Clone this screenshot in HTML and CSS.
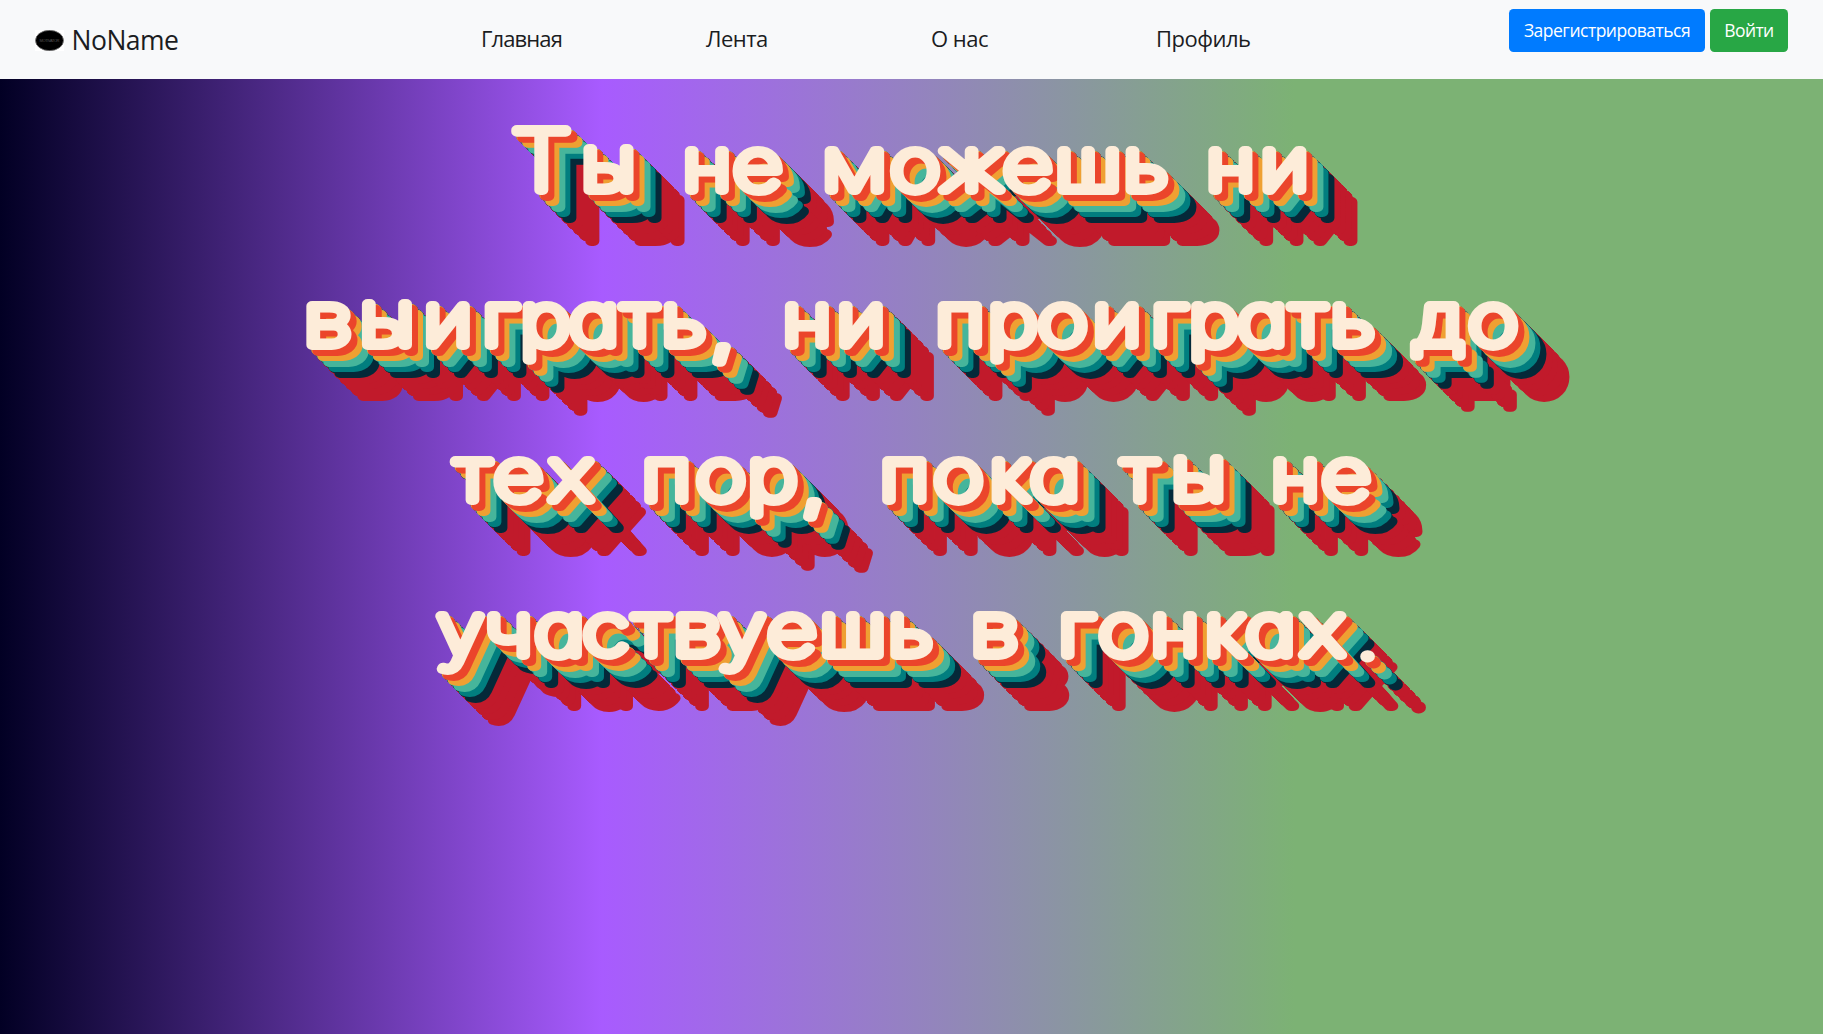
FILE: index.html
```html
<!DOCTYPE html>
<html lang="ru">
<head>
<meta charset="utf-8">
<title>NoName</title>
<link rel="stylesheet" href="styles.css">
</head>
<body>
<header class="navbar">
  <a class="brand">
    <svg class="logo" viewBox="0 0 29 21" width="29" height="21"><rect width="29" height="21" fill="#fff"/><ellipse cx="14.5" cy="10.5" rx="14" ry="10.2" fill="#000" stroke="#777" stroke-width=".8"/><text x="14.5" y="12" text-anchor="middle" textLength="20" class="logo-text">MOTIVATOR</text></svg>
    <span class="brand-name">NoName</span>
  </a>
  <nav class="menu">
    <a class="link home">Главная</a>
    <a class="link feed">Лента</a>
    <a class="link about">О нас</a>
    <a class="link profile">Профиль</a>
  </nav>
  <div class="actions">
    <button class="btn primary">Зарегистрироваться</button>
    <button class="btn success">Войти</button>
  </div>
</header>
<main class="hero">
  <svg class="slogan" viewBox="0 79 1823 700" width="1823" height="700">
    <g transform="scale(1.2 1)">
      <text y="190.5" x="451 507 548 589 631.4 671 712 762.5 809.6 856.3 906.7 954.6 990 1025.3 1070.3"><tspan class="capital">Т</tspan><tspan class="wide">ы</tspan> не можешь ни</text>
      <text y="345.5" x="273 322.5 373.3 416.7 454.4 495 533 569.7 602.2 637 672.5 717.5 760 800 844 885.5 930.8 974 1011.5 1051.8 1090 1127 1163 1199 1244.3">в<tspan class="wide">ы</tspan>играть<tspan class="comma" dy="7">,</tspan><tspan dy="-7"> </tspan>ни проиграть до</text>
      <text y="500.5" x="393.8 431.9 475.7 515 555.3 600.8 643.8 678 716 753.7 798.7 841.3 879.2 915 949.8 998.8 1040 1079.2 1121.7">тех пор<tspan class="comma" dy="7">,</tspan><tspan dy="-7"> </tspan>пока т<tspan class="wide">ы</tspan> не</text>
      <text y="655.5" x="383.7 423.8 466.1 504.8 542.5 580.7 618.4 659.8 710.8 758.7 794 828.6 864 897 936.2 979 1020.7 1058.8 1102 1139.7">участвуешь в гонках<tspan class="dot" dy="5">.</tspan></text>
    </g>
  </svg>
</main>
</body>
</html>
```
FILE: styles.css
```css
html { background: #fff; }
body {
  margin: 0;
  width: 1823px;
  height: 1034px;
  display: flex;
  flex-direction: column;
  overflow: hidden;
  font-family: "Open Sans", "Noto Sans", sans-serif;
}
.navbar {
  height: 79px;
  box-sizing: border-box;
  padding: 0 35px;
  background: #f8f9fa;
  color: #1b1d1f;
  display: grid;
  grid-template-columns: 446px 1fr auto;
}
.brand { display: flex; align-items: center; gap: 7.5px; padding-top: 2px; }
.logo { display: block; }
.logo-text { font: 4px "Liberation Sans", sans-serif; fill: #555; }
.brand-name { font-size: 26.5px; line-height: 40px; letter-spacing: -0.5px; font-weight: 400; margin-top: -1px; }
.menu { display: grid; grid-template-columns: repeat(4, 225px); align-items: center; padding-bottom: 4px; }
.link { font-size: 22px; line-height: 34px; letter-spacing: -0.5px; }
.home { letter-spacing: -0.9px; }
.actions { display: flex; gap: 5px; padding-top: 9px; align-items: flex-start; }
.btn {
  height: 43px;
  padding: 0;
  border: 0;
  border-radius: 4.5px;
  color: #fff;
  font: 17.5px/43px "Open Sans", "Noto Sans", sans-serif;
  text-align: center;
}
.primary { width: 196px; background: #007bff; letter-spacing: -0.5px; }
.success { width: 78px; background: #28a745; letter-spacing: -0.6px; }
.hero {
  flex: 1;
  background: linear-gradient(90deg, #020024 0%, #a85bff 33%, #7cb274 71%);
}
.slogan {
  display: block;
  overflow: visible;
  font-family: Inter, "Noto Sans", sans-serif;
  font-size: 71.5px;
  font-weight: 100;
  font-feature-settings: "cv11";
  text-anchor: middle;
  fill: #fdecd9;
  stroke: #fdecd9;
  stroke-width: 9.8;
  stroke-linejoin: round;
  filter:
    drop-shadow(6px 6px 0 #eb452b)
    drop-shadow(5px 5px 0 #efa032)
    drop-shadow(6px 6px 0 #46b59b)
    drop-shadow(5px 5px 0 #017e7f)
    drop-shadow(6px 6px 0 #052939)
    drop-shadow(6px 6px 0 #c11a2b)
    drop-shadow(5px 5px 0 #c11a2b)
    drop-shadow(6px 6px 0 #c11a2b)
    drop-shadow(6px 6px 0 #c11a2b);
}
.capital { font-size: 82px; }
.wide { font-size: 74px; }
.comma { font-size: 62px; font-weight: 200; }
.dot { font-size: 50px; font-weight: 500; stroke-width: 5; }
```
